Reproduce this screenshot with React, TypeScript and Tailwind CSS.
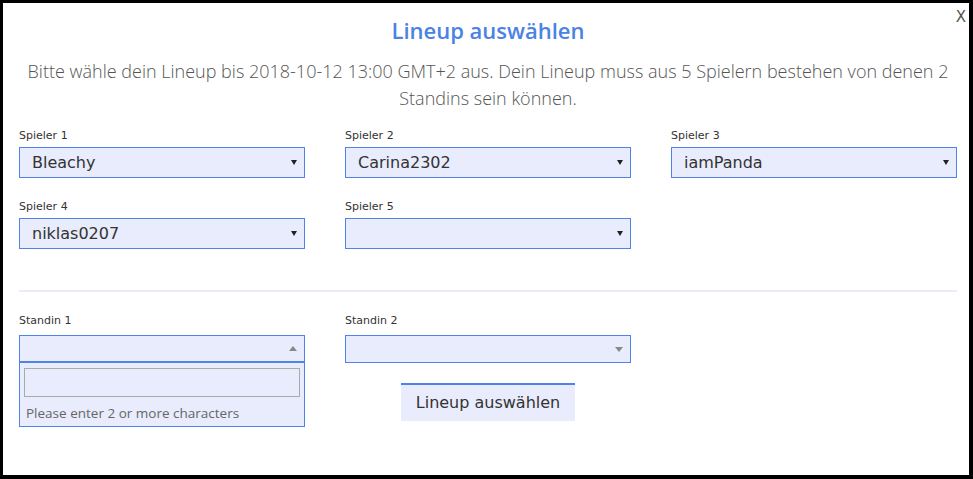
import React from "react";

// Modal "Lineup auswählen": 5 Spieler + 2 Standins, Standin 1 ist geöffnet.

const verdana = "font-['DejaVu_Sans',Verdana,sans-serif]";
const openSans = "font-['Open_Sans',sans-serif]";

function Pfeil({ richtung = "unten", grau = false }: { richtung?: "unten" | "oben"; grau?: boolean }) {
  if (!grau) {
    return (
      <svg width="6" height="5" viewBox="0 0 6 5" className="shrink-0">
        <polygon points="0,0 6,0 3,5" fill="#222" />
      </svg>
    );
  }
  return (
    <svg width="8" height="5" viewBox="0 0 8 5" className="shrink-0">
      <polygon
        points={richtung === "oben" ? "0,5 8,5 4,0" : "0,0 8,0 4,5"}
        fill="#888"
      />
    </svg>
  );
}

function Auswahl({ label, wert }: { label: string; wert?: string }) {
  return (
    <div>
      <div className={`${verdana} mb-[4px] h-[14px] text-[11px] leading-[14px] text-[#333]`}>{label}</div>
      <div className="flex h-[31px] items-center justify-between border border-[#4f83e8] bg-[#e8ecfc] pl-[12px] pr-[7px]">
        <span className={`${verdana} text-[16px] text-[#333]`}>{wert ?? ""}</span>
        <Pfeil />
      </div>
    </div>
  );
}

export default function App() {
  return (
    <div className="h-[479px] w-[973px] bg-black pb-[4px] pl-[3px] pr-[4px] pt-[3px]">
      <div className="relative h-full bg-white pl-4 pr-3">
        <button className={`${verdana} absolute right-[3px] top-[3px] text-[15px] text-[#555]`}>X</button>

        <h2 className={`${openSans} pt-[13px] text-center text-[22px] font-semibold leading-[28px] text-[#4a82e6]`}>
          Lineup auswählen
        </h2>
        <p className={`${openSans} mt-[14px] text-center text-[18px] font-light leading-[27px] text-[#555]`}>
          Bitte wähle dein Lineup bis 2018-10-12 13:00 GMT+2 aus. Dein Lineup muss aus 5 Spielern bestehen von denen 2
          Standins sein können.
        </p>

        <div className="mt-[17px] grid grid-cols-3 gap-x-10 gap-y-[22px]">
          <Auswahl label="Spieler 1" wert="Bleachy" />
          <Auswahl label="Spieler 2" wert="Carina2302" />
          <Auswahl label="Spieler 3" wert="iamPanda" />
          <Auswahl label="Spieler 4" wert="niklas0207" />
          <Auswahl label="Spieler 5" />
        </div>

        <div className="mt-[41px] h-[2px] bg-[#e8ecfc]" />

        <div className="mt-[22px] grid grid-cols-3 gap-x-10">
          <div className="relative">
            <div className={`${verdana} mb-[7px] h-[14px] text-[11px] leading-[14px] text-[#333]`}>Standin 1</div>
            <div className="flex h-[28px] items-center justify-end border border-b-2 border-[#4f83e8] bg-[#e8ecfc] pr-[7px]">
              <Pfeil richtung="oben" grau />
            </div>
            <div className="absolute left-0 right-0 top-full z-10 border border-t-0 border-[#4f83e8] bg-[#e8ecfc] px-[4px] pb-[4px] pt-[5px]">
              <div className="h-[29px] border border-[#aaa] bg-[#e8ecfc]" />
              <div className={`${openSans} pl-[2px] pt-[7px] text-[13.5px] leading-[18px] text-[#666]`}>
                Please enter 2 or more characters
              </div>
            </div>
          </div>
          <div>
            <div className={`${verdana} mb-[7px] h-[14px] text-[11px] leading-[14px] text-[#333]`}>Standin 2</div>
            <div className="flex h-[28px] items-center justify-end border border-[#4f83e8] bg-[#e8ecfc] pr-[7px]">
              <Pfeil grau />
            </div>
          </div>
        </div>

        <div className="mt-[20px] flex justify-center">
          <button
            className={`${verdana} h-[38px] w-[174px] border-t-2 border-[#4f83e8] bg-[#e8ecfc] text-[16px] text-[#333]`}
          >
            Lineup auswählen
          </button>
        </div>
      </div>
    </div>
  );
}
